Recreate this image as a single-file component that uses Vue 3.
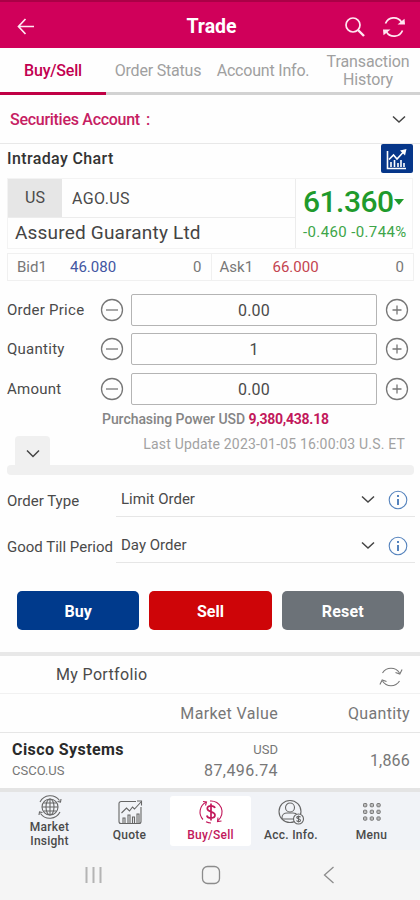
<template>
  <div class="app">
    <header class="header">
      <svg class="back" width="18" height="20" viewBox="0 0 18 20">
        <path d="M8.500 2 1.500 9.500l7 7.500M2 9.500h15"/>
      </svg>
      <h1>Trade</h1>
      <div class="header-icons">
        <svg width="22" height="22" viewBox="0 0 22 22">
          <circle cx="9" cy="9" r="7"/>
          <path d="m14 14 6 6" class="thick"/>
        </svg>
        <svg width="24" height="22" viewBox="0 0 24 22">
          <path d="M3.500 7.500A9 9 0 0 1 19.500 6M20.500 14.500A9 9 0 0 1 4.500 16"/>
          <path class="solid" d="M15.500 8.500h7.500l-.5-5.700zM8.500 13.500H1l.5 5.700z"/>
        </svg>
      </div>
    </header>

    <nav class="tabs">
      <button v-for="(tab, i) in tabs" :key="tab" :class="['tab', {active: activeTab === i}]" @click="activeTab = i">
        {{ tab }}
      </button>
    </nav>

    <div class="account">
      <span class="account-label">Securities Account</span><span class="colon">:</span>
      <svg class="chevron" width="14" height="9" viewBox="0 0 14 9"><path d="m1 1.500 6 5.500 6-5.500"/></svg>
    </div>

    <div class="chart-row">
      <h2>Intraday Chart</h2>
      <div class="chart-btn">
        <svg width="22" height="22" viewBox="0 0 22 22">
          <path d="M1.500 3v17.500H20"/>
          <path d="m3 11.500 4.500-4.500 3.500 4 6-6.500"/>
          <path class="solid" d="M14 2.500 20.500 1 19 7.500z"/>
          <path d="M5 19v-5M8.500 19v-7M12 19v-4M15 19v-7M18 19v-4"/>
        </svg>
      </div>
    </div>

    <section class="quote">
      <div class="stock">
        <div class="code">
          <span class="market">US</span>
          <span class="symbol">AGO.US</span>
        </div>
        <div class="name">Assured Guaranty Ltd</div>
      </div>
      <div class="price">
        <div class="last"><span>61.360</span><i></i></div>
        <div class="change">-0.460 -0.744%</div>
      </div>
    </section>

    <section class="bidask">
      <div class="side">
        <span class="lbl">Bid1</span><span class="bid">46.080</span><span class="vol">0</span>
      </div>
      <div class="side ask-side">
        <span class="lbl">Ask1</span><span class="ask">66.000</span><span class="vol">0</span>
      </div>
    </section>

    <section class="fields">
      <div class="field" v-for="f in fields" :key="f.label">
        <span class="label">{{ f.label }}</span>
        <svg class="step" width="24" height="24" viewBox="0 0 24 24" @click="step(f, -1)">
          <circle cx="12" cy="12" r="10.500"/>
          <path d="M6 12h12"/>
        </svg>
        <div class="value">{{ f.value.toFixed(f.digits) }}</div>
        <svg class="step" width="24" height="24" viewBox="0 0 24 24" @click="step(f, 1)">
          <circle cx="12" cy="12" r="10.500"/>
          <path d="M7.500 12h9M12 7.500v9"/>
        </svg>
      </div>
    </section>

    <div class="power">Purchasing Power USD <b>9,380,438.18</b></div>

    <div class="update">
      <div class="toggle">
        <svg class="chevron" width="14" height="9" viewBox="0 0 14 9"><path d="m1 1.500 6 6 6-6"/></svg>
      </div>
      <span>Last Update 2023-01-05 16:00:03 U.S. ET</span>
    </div>
    <div class="bar"></div>

    <section class="options">
      <div class="option" v-for="o in options" :key="o.label">
        <span class="label">{{ o.label }}</span>
        <div class="select">
          <span class="selected">{{ o.value }}</span>
          <svg class="chevron" width="14" height="9" viewBox="0 0 14 9"><path d="m1 1.500 6 5.500 6-5.500"/></svg>
          <svg class="info" width="20" height="20" viewBox="0 0 20 20">
            <circle cx="10" cy="10" r="8.800"/>
            <path d="M10 5v2M10 9v6"/>
          </svg>
        </div>
      </div>
    </section>

    <div class="actions">
      <button class="buy">Buy</button>
      <button class="sell">Sell</button>
      <button class="reset">Reset</button>
    </div>

    <section class="portfolio">
      <div class="p-title">
        <span>My Portfolio</span>
        <svg width="26" height="24" viewBox="0 0 26 24">
          <path d="M4.500 8A10 10 0 0 1 21.500 8M21.500 16A10 10 0 0 1 4.500 16"/>
          <path d="m17.500 7.500 4.300 1.500 2.300-4.500M8.500 16.500l-4.300-1.500-2.300 4.500"/>
        </svg>
      </div>
      <div class="p-head">
        <span class="mv">Market Value</span>
        <span class="qty">Quantity</span>
      </div>
      <div class="p-row">
        <div class="holding">
          <b>Cisco Systems</b>
          <small>CSCO.US</small>
        </div>
        <div class="mv">
          <small>USD</small>
          <span>87,496.74</span>
        </div>
        <span class="qty">1,866</span>
      </div>
    </section>

    <nav class="bottom">
      <div class="item">
        <svg width="26" height="24" viewBox="0 0 26 24">
          <circle cx="13" cy="12" r="8"/>
          <ellipse cx="13" cy="12" rx="4" ry="8"/>
          <path d="M13 4v16M5 12h16M6.500 8h13M6.500 16h13"/>
          <path d="M3 7A11.500 11.500 0 0 1 22.500 5.500M23 17A11.500 11.500 0 0 1 3.500 18.500M20.500 6.500l3 .5.500-3M5.500 17.500l-3-.5-.5 3"/>
        </svg>
        <span>Market<br>Insight</span>
      </div>
      <div class="item">
        <svg width="26" height="26" viewBox="0 0 26 26">
          <path d="M19 2.500H4A2 2 0 0 0 2 4.500v18a2 2 0 0 0 2 2h18a2 2 0 0 0 2-2V8"/>
          <path d="m4.500 14 5-5 3 3 3-4 2 2L24 3M20 2h4.500v4.500"/>
          <path d="M6 24v-5h2v5M11 24v-8h2v8M15.500 24v-6h2v6M20 24v-9h2v9"/>
        </svg>
        <span>Quote</span>
      </div>
      <div class="item current">
        <svg width="26" height="26" viewBox="0 0 26 26">
          <path d="M5 20.500A11 11 0 0 1 8 3.200M12 2A11 11 0 0 1 20 21.500M13 24a11 11 0 0 1-5-1.200"/>
          <path d="M5 2.500l3.500.5-1 3.500M23.500 22l-4 .5.500-4"/>
          <path class="dollar" d="M17 9c-.5-1.600-2-2.200-4-2.200S9.300 7.700 9.300 9.600c0 4.300 7.700 2.200 7.700 6.500 0 2-1.800 3-4 3s-3.700-.8-4.200-2.600M13 4.500v17"/>
        </svg>
        <span>Buy/Sell</span>
      </div>
      <div class="item">
        <svg width="28" height="26" viewBox="0 0 28 26">
          <circle cx="13" cy="12.500" r="11"/>
          <circle cx="13" cy="8.500" r="4.500"/>
          <path d="M5 20v-1.500c0-3 2.500-4.500 5-4.500h6c2 0 3.500.7 4.300 2M5 20h12"/>
          <circle class="bg" cx="21.500" cy="20" r="5"/>
          <path d="M23.500 18.200c-.7-1.200-3.800-1.200-3.800.3s3.800 1.200 3.800 2.900-3.300 1.600-4 .2M21.500 16.500v7"/>
        </svg>
        <span>Acc. Info.</span>
      </div>
      <div class="item">
        <svg width="22" height="26" viewBox="0 0 22 26">
          <rect v-for="n in 9" :key="n" :x="2.500 + (n - 1) % 3 * 6.700" :y="4.500 + Math.floor((n - 1) / 3) * 6.700" width="3.300" height="3.300" rx=".8"/>
        </svg>
        <span>Menu</span>
      </div>
    </nav>

    <footer class="system">
      <svg width="20" height="18" viewBox="0 0 20 18"><path class="light" d="M2.500 1v16M9.500 1v16M16.500 1v16"/></svg>
      <svg class="home" width="20" height="20" viewBox="0 0 20 20"><rect x="1.500" y="1.500" width="17" height="17" rx="5"/></svg>
      <svg width="20" height="20" viewBox="0 0 20 20"><path d="M14.500 2 5.500 10l9 8"/></svg>
    </footer>
  </div>
</template>

<script setup>
import {ref} from "vue";

const tabs = ['Buy/Sell', 'Order Status', 'Account Info.', 'Transaction History']
let activeTab = ref(0)

let fields = ref([
  {label: 'Order Price', value: 0, digits: 2},
  {label: 'Quantity', value: 1, digits: 0},
  {label: 'Amount', value: 0, digits: 2},
])

const options = [
  {label: 'Order Type', value: 'Limit Order'},
  {label: 'Good Till Period', value: 'Day Order'},
]

function step(field, dir) {
  field.value = Math.max(0, field.value + dir)
}
</script>

<style>
body {
  background: #fefefe;
}
</style>

<style scoped>
.app {
  width: 420px;
  height: 900px;
  overflow: hidden;
  font-family: Roboto, sans-serif;
  font-size: 15px;
  color: #4a4a4a;
  background: #fefefe;
}

.app, .app * {
  box-sizing: border-box;
}

button {
  font-family: inherit;
  border: 0;
  padding: 0;
}

svg {
  display: block;
  flex: none;
  fill: none;
  stroke: #666;
  stroke-width: 1.1;
}

.step {
  stroke: #777;
  stroke-width: 1.3;
}

.chevron {
  stroke: #444;
  stroke-width: 1.5;
}

.header {
  height: 48px;
  padding: 3px 14px 0 17px;
  display: grid;
  grid-template-columns: 1fr auto 1fr;
  align-items: center;
  background: #d0005a;
  border-top: 2px solid #aa0046;
}

.header svg {
  stroke: #ffe8f2;
  stroke-width: 1.7;
}

.header .thick {
  stroke-width: 2.400;
}

.header .solid {
  fill: #ffe8f2;
  stroke: none;
}

.header h1 {
  margin: 0;
  padding-top: 1px;
  font-size: 19.500px;
  line-height: 24px;
  font-weight: 700;
  color: #fff;
}

.header-icons {
  display: flex;
  justify-content: flex-end;
  gap: 16px;
}

.tabs {
  display: grid;
  grid-template-columns: 106px 104px 106px 104px;
  height: 47px;
}

.tab {
  padding-top: 2px;
  background: none;
  border-bottom: 3px solid #d2d2d2;
  color: #a0a0a0;
  font-size: 16px;
  line-height: 18px;
  letter-spacing: -.2px;
}

.tab:last-child {
  letter-spacing: -.1px;
}

.tab.active {
  color: #c20050;
  border-color: #c00045;
  font-weight: 500;
}

.account {
  height: 49px;
  padding: 0 14px 0 10px;
  display: flex;
  align-items: center;
  border-bottom: 1px solid #e8e8e8;
  color: #c62062;
  font-size: 16px;
  font-weight: 500;
}

.account-label {
  letter-spacing: -.28px;
}

.colon {
  margin-left: 6px;
}

.account .chevron {
  margin-left: auto;
}

.chart-row {
  height: 34px;
  padding: 0 7px;
  display: flex;
  justify-content: space-between;
}

.chart-row h2 {
  margin: 0;
  font-size: 16px;
  font-weight: 500;
  line-height: 30px;
  letter-spacing: .38px;
  color: #333;
}

.chart-btn {
  width: 32px;
  height: 29px;
  padding: 4px 5px;
  border-radius: 2px;
  background: #063689;
}

.chart-btn svg {
  stroke: #fff;
  stroke-width: 1.6;
}

.chart-btn .solid {
  fill: #fff;
  stroke: none;
}

.quote {
  margin: 0 7px;
  height: 71px;
  display: flex;
  border: 1px solid #f3f3f3;
}

.stock {
  width: 288px;
  border-right: 1px solid #ececec;
}

.code {
  height: 39px;
  display: flex;
  align-items: center;
  border-bottom: 1px solid #ececec;
  font-size: 16px;
}

.market {
  width: 54px;
  line-height: 38px;
  text-align: center;
  background: #e6e6e6;
}

.symbol {
  margin-left: 10px;
  letter-spacing: .4px;
}

.name {
  padding-left: 7px;
  font-size: 19px;
  line-height: 29px;
  letter-spacing: .19px;
  color: #444;
}

.price {
  flex: 1;
  padding-left: 7px;
  color: #1f9a2c;
  white-space: nowrap;
}

.last {
  display: flex;
  align-items: center;
  height: 40px;
  padding-top: 5px;
  font-size: 30px;
  font-weight: 500;
  letter-spacing: -.5px;
}

.last i {
  margin-left: 0;
  border: 5px solid transparent;
  border-top: 6px solid #1f9a2c;
  border-bottom: 0;
}

.change {
  line-height: 26px;
  font-size: 15px;
  letter-spacing: .38px;
  color: #3da548;
}

.bidask {
  margin: 4px 6px 0 7px;
  height: 28px;
  display: flex;
  border: 1px solid #f0f0f0;
  font-size: 15px;
  color: #777;
}

.side {
  width: 204px;
  padding: 0 9px;
  display: flex;
  align-items: center;
}

.ask-side {
  padding: 0 9px 0 8px;
  border-left: 1px solid #f0f0f0;
}

.lbl {
  width: 53px;
}

.bid {
  color: #4256a2;
}

.ask {
  color: #c44450;
}

.vol {
  margin-left: auto;
}

.fields {
  padding: 13px 11px 0 7px;
  display: grid;
  gap: 8px;
}

.field {
  height: 31.500px;
  display: flex;
  align-items: center;
}

.field .label {
  width: 93px;
  letter-spacing: .26px;
}

.label {
  flex: none;
  white-space: nowrap;
}

.field .value {
  width: 246px;
  height: 32px;
  margin: 0 8px 0 7px;
  line-height: 31px;
  text-align: center;
  border: 1px solid #b4b4b4;
  border-radius: 2px;
  font-size: 16px;
  letter-spacing: .2px;
}

.power {
  margin: 4px 0 0 102px;
  line-height: 20px;
  font-size: 14px;
  font-weight: 500;
  letter-spacing: -.05px;
  color: #858585;
}

.power b {
  letter-spacing: -.25px;
  color: #c2185b;
}

.update {
  height: 36px;
  padding: 0 15px;
  display: flex;
  justify-content: space-between;
  align-items: flex-end;
  font-size: 14px;
  letter-spacing: .18px;
  color: #a2a2a2;
}

.update > span {
  height: 29px;
}

.toggle {
  width: 35px;
  height: 29px;
  padding: 13px 11px;
  border-radius: 4px 4px 0 0;
  background: #f0f0f0;
}

.bar {
  height: 10px;
  margin: 0 6px 0 7px;
  border-radius: 4px;
  background: #f0f0f0;
}

.options {
  padding: 0 5px 0 7px;
}

.option {
  height: 46px;
  display: flex;
  align-items: flex-end;
  line-height: 31px;
}

.option:first-child {
  height: 42px;
}

.option .label {
  width: 109px;
}

.select {
  flex: 1;
  height: 34px;
  padding: 1px 7px 0 5px;
  display: flex;
  align-items: center;
  border-bottom: 1px solid #e6e6e6;
}

.select .chevron {
  margin-left: auto;
}

.info {
  margin-left: 13px;
  stroke: #5583bd;
}

.info path {
  stroke-width: 2;
}

.actions {
  padding: 28px 16px 22px 17px;
  display: flex;
  gap: 10px;
}

.actions button {
  flex: 1;
  height: 39px;
  padding-top: 2px;
  border-radius: 5px;
  color: #fff;
  font-size: 16px;
  font-weight: 700;
}

.buy {
  background: #003a8c;
}

.sell {
  background: #ce0508;
}

.actions .reset {
  background: #6c7278;
  letter-spacing: .2px;
}

.portfolio {
  border-top: 4px solid #e8e8e8;
  border-bottom: 4px solid #e4e4e4;
}

.p-title {
  height: 38px;
  padding: 5px 16px 0 56px;
  display: flex;
  align-items: center;
  justify-content: space-between;
  border-bottom: 1px solid #f1f1f1;
}

.p-title span {
  height: 23px;
  font-size: 16px;
  letter-spacing: .35px;
}

.p-title svg {
  stroke: #777;
}

.p-head, .p-row {
  padding: 2px 10px 0 12px;
  display: grid;
  grid-template-columns: 134px 132px 1fr;
  align-items: center;
  font-size: 16px;
  color: #777;
}

.p-head {
  height: 39px;
  border-bottom: 1px solid #e6e6e6;
  letter-spacing: .35px;
}

.mv, .qty {
  text-align: right;
}

.p-head .mv {
  grid-column: 2;
}

.p-row {
  height: 55px;
  padding-top: 0;
}

.p-row .qty {
  letter-spacing: .2px;
}

.p-row > div {
  display: flex;
  flex-direction: column;
  gap: 2px;
  line-height: 19px;
}

.p-row .mv span {
  letter-spacing: .4px;
}

.p-row b {
  letter-spacing: .42px;
  color: #2a2a2a;
}

.p-row small {
  font-size: 13px;
}

.bottom {
  height: 58px;
  padding: 0 8px;
  display: grid;
  grid-template-columns: 81px 81px 81px 80px 1fr;
  background: #f1f3f7;
}

.item {
  padding-top: 7px;
  display: flex;
  flex-direction: column;
  align-items: center;
  text-align: center;
  font-size: 12px;
  line-height: 14px;
  letter-spacing: .25px;
  gap: 3px;
  font-weight: 500;
}

.item:first-child {
  padding: 3px 0 0 2px;
  gap: 1px;
}

.item rect {
  fill: #bbb;
  stroke: #777;
  stroke-width: 1;
}

.item .bg {
  fill: #f1f3f7;
}

.current {
  margin: 4px 0;
  padding-top: 3px;
  border-radius: 3px;
  background: #fff;
  color: #c2185b;
}

.current svg {
  stroke: #c2185b;
}

.current .dollar {
  stroke-width: 1.700;
}

.system {
  height: 50px;
  padding: 0 81px 0 84px;
  display: flex;
  align-items: center;
  justify-content: space-between;
  background: #f5f5f5;
}

.system svg {
  stroke: #8c8c8c;
  stroke-width: 1.3;
}

.system .home {
  margin-right: 2px;
}

.system .light {
  stroke: #b4b4b4;
  stroke-width: 2;
}
</style>
